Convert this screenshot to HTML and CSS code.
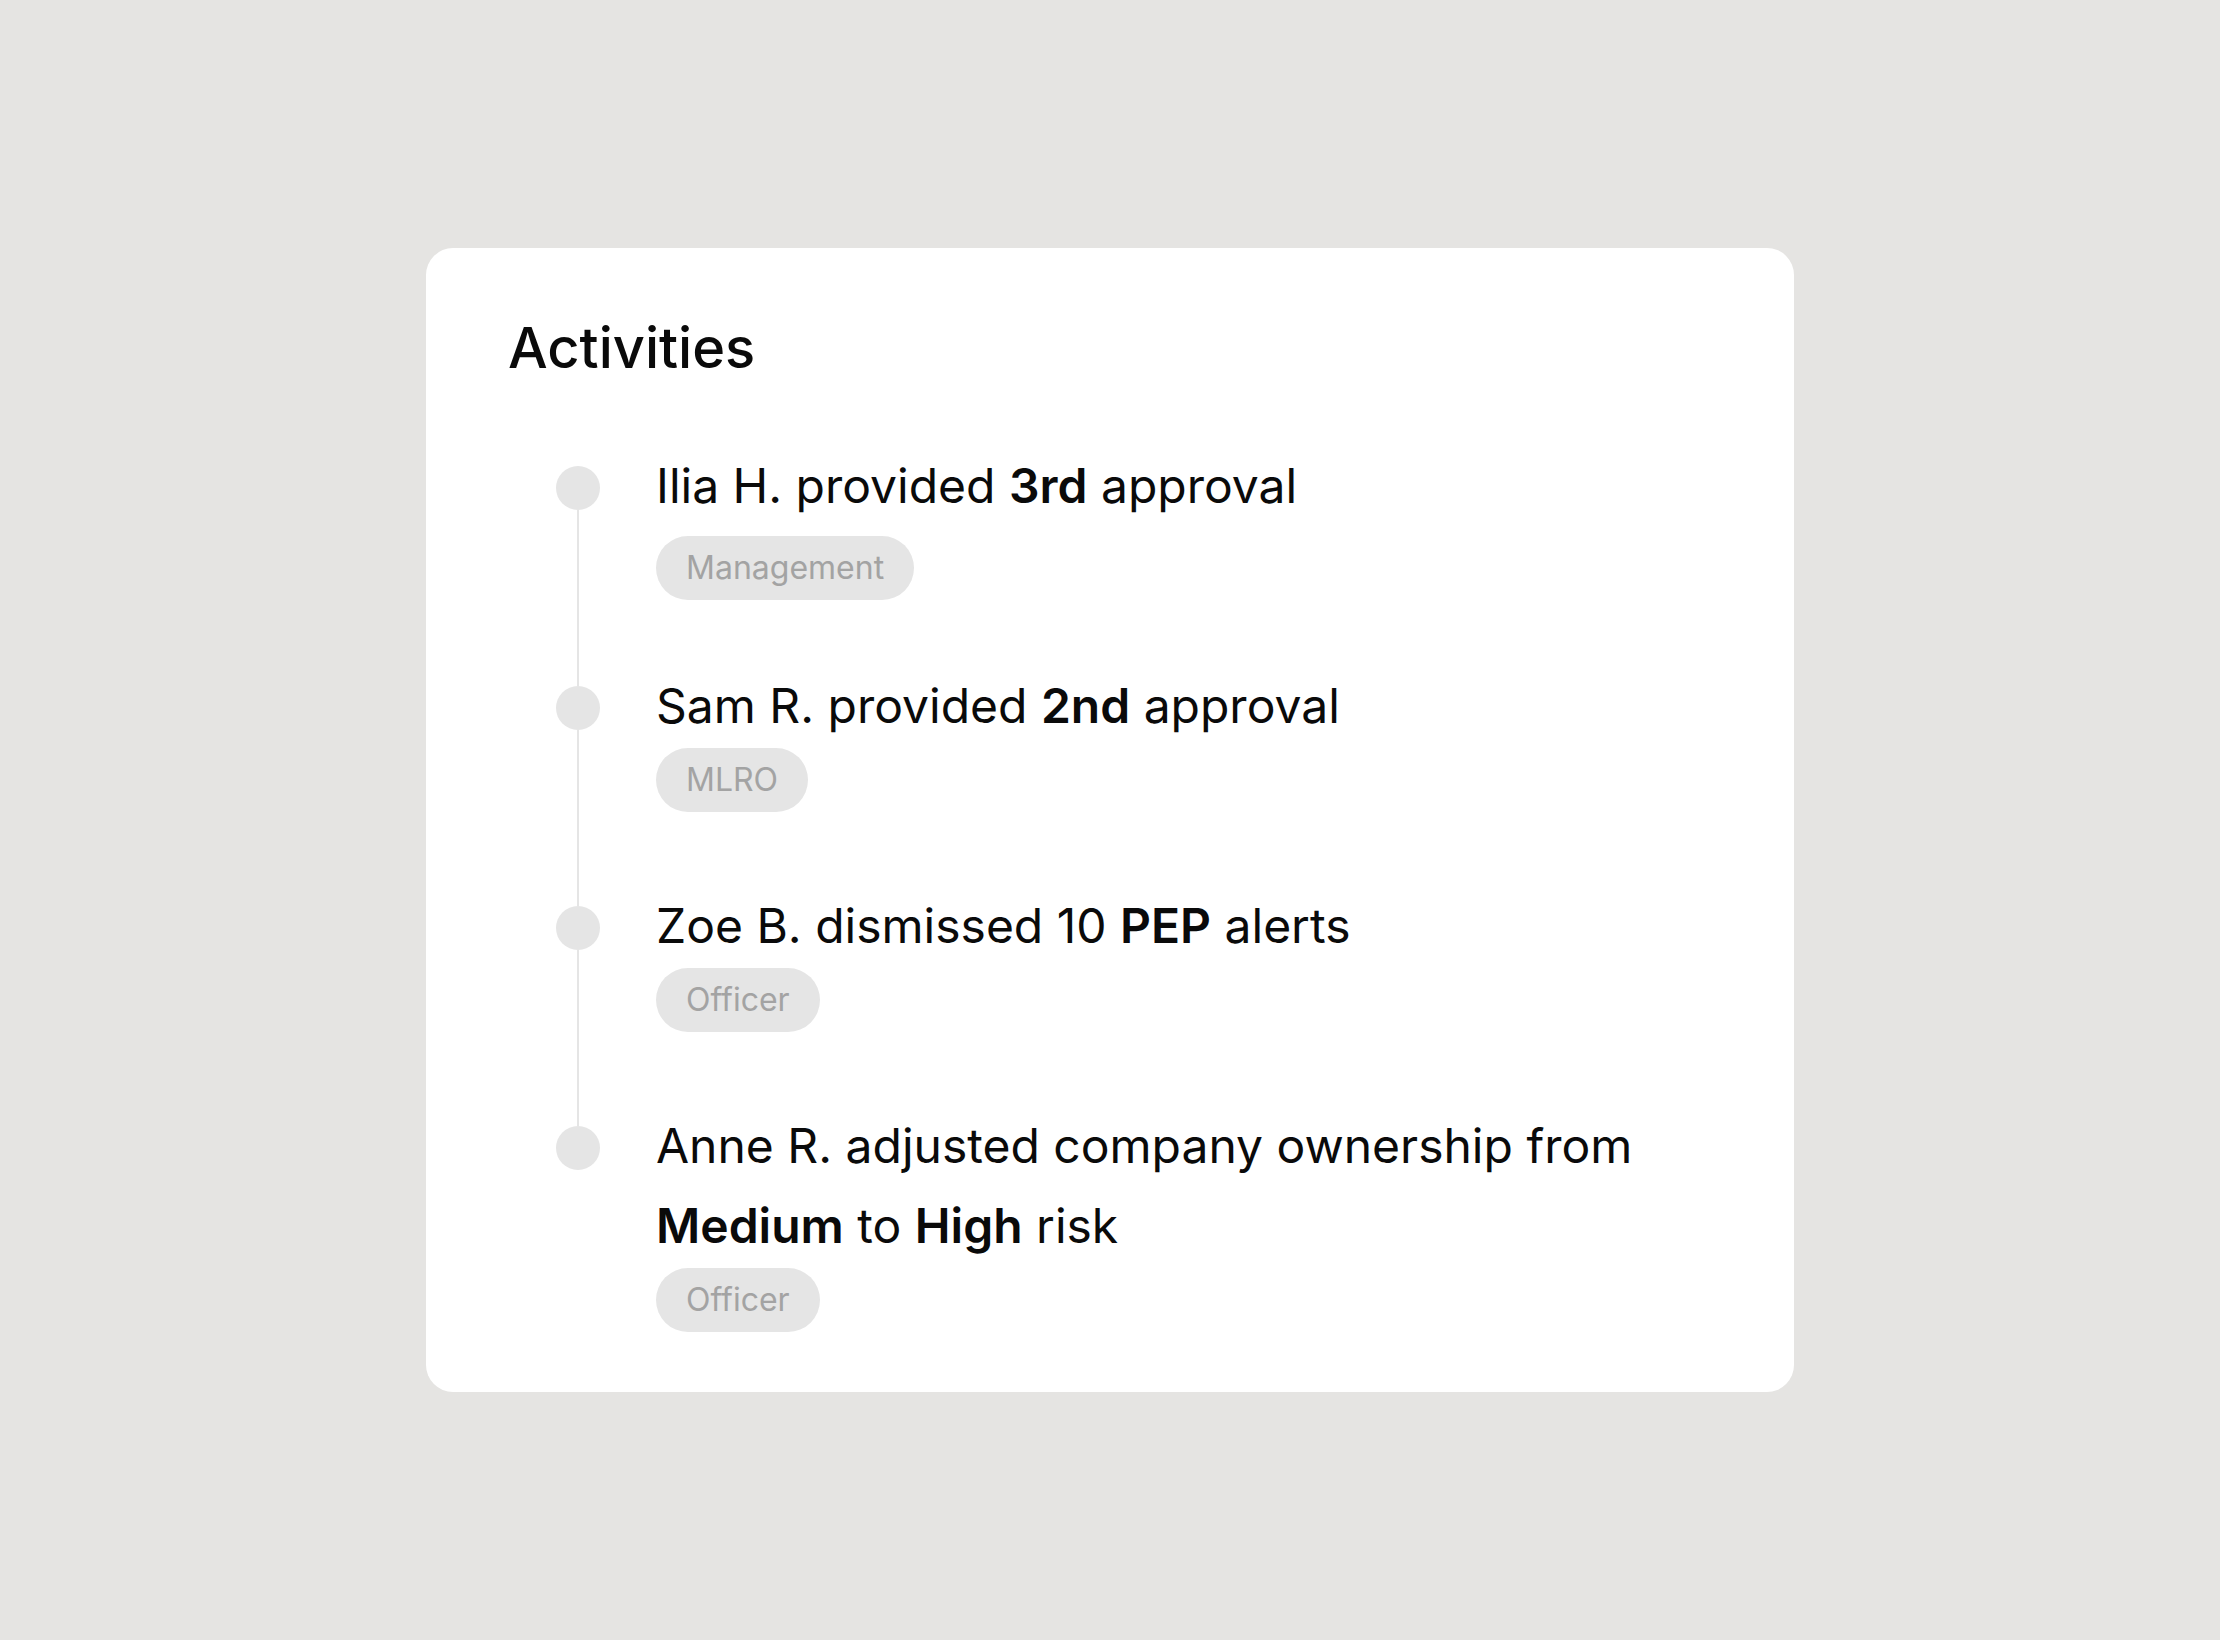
FILE: index.html
```html
<!DOCTYPE html>
<html lang="en">
<head>
  <meta charset="UTF-8" />
  <meta name="viewport" content="width=device-width, initial-scale=1.0" />
  <title>Activities</title>
  <link rel="stylesheet" href="styles.css">
</head>
<body>
  <div class="card">
    <h1>Activities</h1>
    <ul class="timeline">
      <li class="item">
        <div class="rail"><span class="line-top"></span><span class="dot"></span><span class="line"></span></div>
        <div class="content">
          <p class="text">Ilia H. provided <b>3rd</b> approval</p>
          <span class="tag">Management</span>
        </div>
      </li>
      <li class="item">
        <div class="rail"><span class="line-top"></span><span class="dot"></span><span class="line"></span></div>
        <div class="content">
          <p class="text">Sam R. provided <b>2nd</b> approval</p>
          <span class="tag">MLRO</span>
        </div>
      </li>
      <li class="item">
        <div class="rail"><span class="line-top"></span><span class="dot"></span><span class="line"></span></div>
        <div class="content">
          <p class="text">Zoe B. dismissed 10 <b>PEP</b> alerts</p>
          <span class="tag">Officer</span>
        </div>
      </li>
      <li class="item">
        <div class="rail"><span class="line-top"></span><span class="dot"></span><span class="line"></span></div>
        <div class="content">
          <p class="text">Anne R. adjusted company ownership from <b>Medium</b> to <b>High</b> risk</p>
          <span class="tag">Officer</span>
        </div>
      </li>
    </ul>
  </div>
</body>
</html>
```

FILE: styles.css
```css
/* Activities card */
:root { --bg: #e5e4e2; --card: #fff; --text: #0a0a0a; --muted: #e5e5e5; --tag-text: #a3a3a3; }
* { margin: 0; padding: 0; box-sizing: border-box; }
body {
  background: var(--bg);
  font-family: 'Inter', 'Liberation Sans', sans-serif;
  color: var(--text);
  display: flex; justify-content: center; align-items: center;
  min-height: 100vh;
}
.card {
  background: var(--card);
  border-radius: 27px;
  width: 1368px;
  padding: 66px 82px 60px;
}
h1 { font-size: 56px; font-weight: 500; line-height: 68px; }
.timeline { list-style: none; margin-top: 64px; padding-left: 48px; }
.item { display: flex; gap: 56px; }
.rail { width: 44px; display: flex; flex-direction: column; align-items: center; }
.line-top { width: 2px; height: 20px; background: var(--muted); }
.item:first-child .line-top { visibility: hidden; }
.dot { width: 44px; height: 44px; border-radius: 50%; background: var(--muted); flex-shrink: 0; }
.line { width: 2px; flex: 1; background: var(--muted); }
.item:last-child .line { visibility: hidden; }
.content { display: flex; flex-direction: column; align-items: flex-start; padding-bottom: 74px; }
.item:first-child .content { padding-bottom: 66px; }
.item:last-child .content { padding-bottom: 0; }
.text { font-size: 48px; line-height: 80px; max-width: 1020px; }
.text b { font-weight: 600; }
.tag {
  display: inline-block; margin-top: 2px;
  height: 64px; line-height: 64px; padding: 0 30px;
  border-radius: 32px; background: var(--muted);
  color: var(--tag-text); font-size: 32px;
}
.item:first-child .tag { margin-top: 10px; }
```
